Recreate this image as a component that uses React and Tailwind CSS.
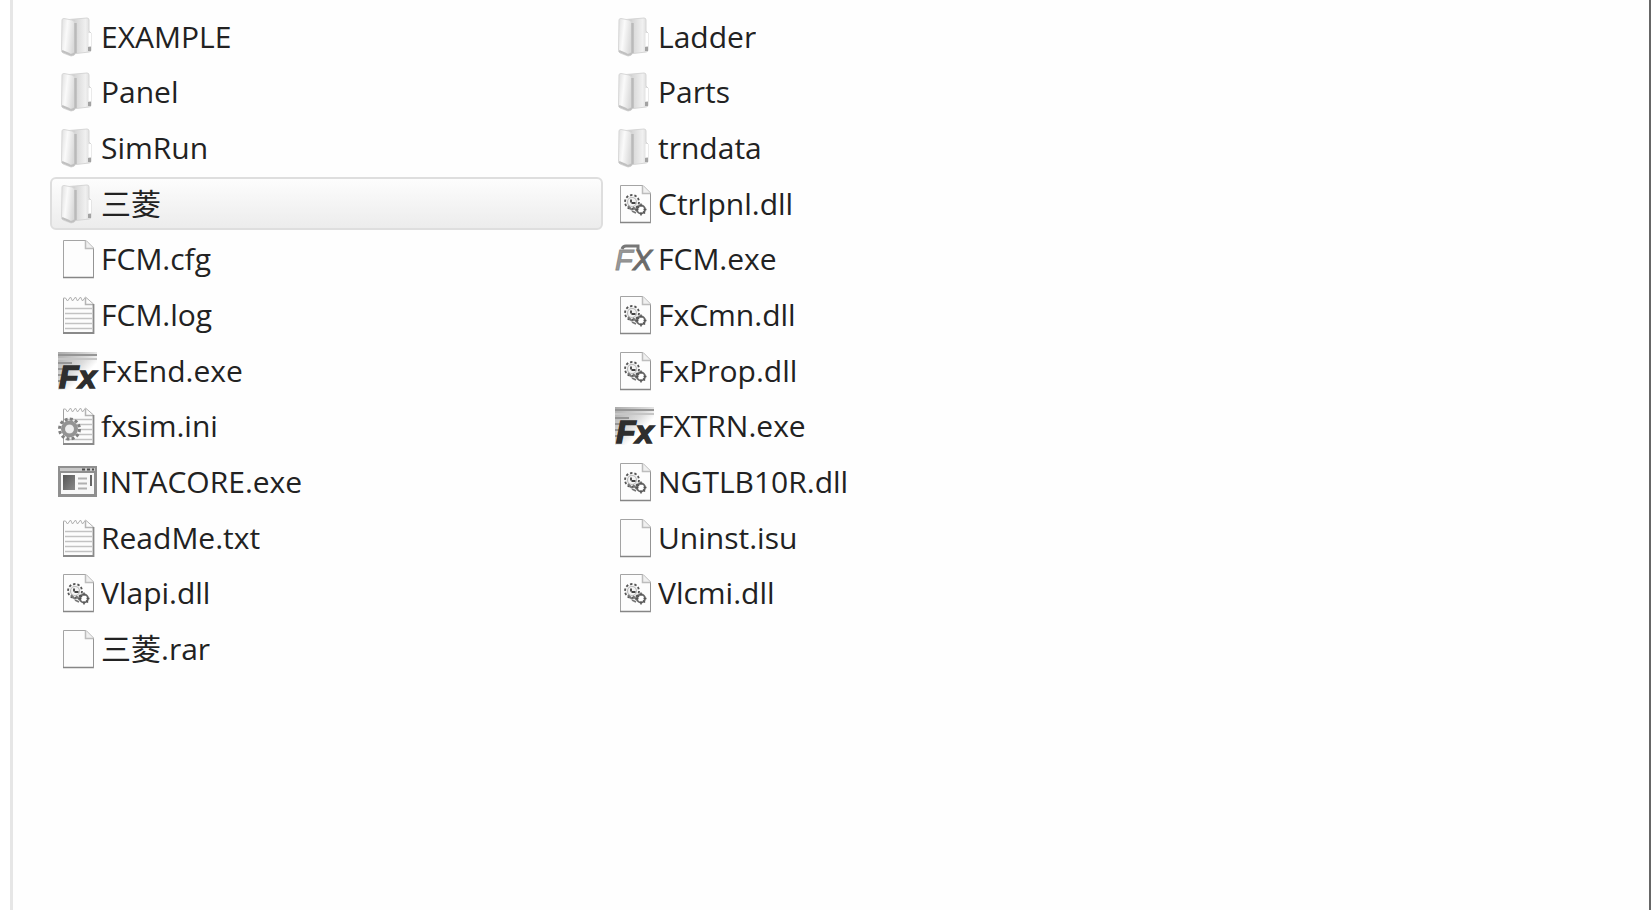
import { useState } from "react";

const columns = [
  [
    ["folder", "EXAMPLE"],
    ["folder", "Panel"],
    ["folder", "SimRun"],
    ["folder", "三菱"],
    ["file", "FCM.cfg"],
    ["notes", "FCM.log"],
    ["fx", "FxEnd.exe"],
    ["config", "fxsim.ini"],
    ["program", "INTACORE.exe"],
    ["notes", "ReadMe.txt"],
    ["library", "Vlapi.dll"],
    ["file", "三菱.rar"],
  ],
  [
    ["folder", "Ladder"],
    ["folder", "Parts"],
    ["folder", "trndata"],
    ["library", "Ctrlpnl.dll"],
    ["fxOutline", "FCM.exe"],
    ["library", "FxCmn.dll"],
    ["library", "FxProp.dll"],
    ["fx", "FXTRN.exe"],
    ["library", "NGTLB10R.dll"],
    ["file", "Uninst.isu"],
    ["library", "Vlcmi.dll"],
  ],
];

function Gradients() {
  return (
    <svg className="absolute size-0" aria-hidden="true">
      <defs>
        <linearGradient id="cover" x1="0" x2="1" y1="0" y2="0.3">
          <stop offset="0" stopColor="#dedede" />
          <stop offset="0.45" stopColor="#fafafa" />
          <stop offset="1" stopColor="#dadada" />
        </linearGradient>
        <linearGradient id="back" x1="0" x2="1" y1="0" y2="0">
          <stop offset="0" stopColor="#b4b4b4" />
          <stop offset="0.3" stopColor="#d8d8d8" />
          <stop offset="0.75" stopColor="#f0f0f0" />
          <stop offset="1" stopColor="#d8d8d8" />
        </linearGradient>
        <linearGradient id="sky" x1="0" x2="1" y1="0" y2="1">
          <stop offset="0" stopColor="#ababab" />
          <stop offset="0.45" stopColor="#dcdcdc" />
          <stop offset="0.65" stopColor="#ffffff" />
        </linearGradient>
        <linearGradient id="panel" x1="0" x2="1" y1="0" y2="1">
          <stop offset="0" stopColor="#555" />
          <stop offset="1" stopColor="#8a8a8a" />
        </linearGradient>
      </defs>
    </svg>
  );
}

function Folder() {
  return (
    <>
      <path d="M11 2.5 L29 1 Q31 1 31 3 V14 L33 16 V33 Q33 35 31 35 L14 37Z" fill="url(#back)" stroke="#d6d6d6" />
      <path d="M30.5 16 h2.500 v13 h-2.500z" fill="#fff" />
      <path d="M30 30 h3 v4 h-3z" fill="#a2a2a2" />
      <path d="M4 3 Q4 1.500 6 1.500 L14 3 Q17 4 17 7 V36 Q17 39 13 39 L5 36 Q3.500 35 3.500 33Z" fill="url(#cover)" stroke="#d8d8d8" />
      <path d="M17.500 6 V36" stroke="#bababa" strokeWidth="2.500" fill="none" />
      <path d="M4 34 L11 37 Q14 39 17 36" stroke="#c0c0c0" strokeWidth="2" fill="none" />
    </>
  );
}

function Sheet() {
  return (
    <>
      <path d="M5.500 1.500 H28 L35.500 9 V38.500 H5.500Z" fill="#fdfdfd" stroke="#a4a4a4" />
      <path d="M5 38.500 H36" stroke="#868686" strokeWidth="1.500" />
      <path d="M35.500 9 V39" stroke="#949494" />
      <path d="M27.500 1.500 V9.500 H35.500" fill="#f0f0f0" stroke="#bdbdbd" strokeWidth="1.500" />
    </>
  );
}

function Notes() {
  return (
    <>
      <path d="M5.500 3 l2 0 2 3 3-4 2 4 3-4 2 4 3-4 2 4 3-4 L35.500 9 V38.500 H5.500Z" fill="#fcfcfc" stroke="#b0b0b0" />
      <path d="M27.500 3 V9.500 H35.500" fill="none" stroke="#b4b4b4" strokeWidth="1.500" />
      <path d="M7 13.500 H34 M7 18.500 H34 M7 23.500 H34 M7 28.500 H34 M7 33.500 H34" stroke="#c2c2c2" strokeWidth="1.500" />
      <path d="M5.500 4 V38" stroke="#a0a0a0" />
      <path d="M5 38 H35.500 V9" stroke="#8a8a8a" strokeWidth="1.800" fill="none" />
    </>
  );
}

function Config() {
  return (
    <>
      <Notes />
      <circle cx="11.500" cy="23" r="10" fill="none" stroke="#808080" strokeWidth="3" strokeDasharray="3 2.236" />
      <circle cx="11.500" cy="23" r="6.500" fill="#dedede" stroke="#939393" strokeWidth="4" />
      <circle cx="11.500" cy="23" r="4" fill="#eee" />
    </>
  );
}

function Library() {
  return (
    <>
      <Sheet />
      <circle cx="17" cy="18" r="7" fill="#f4f4f4" stroke="#555" strokeWidth="1.800" strokeDasharray="2.400 1.998" />
      <circle cx="17" cy="18" r="4.500" fill="none" stroke="#bcbcbc" strokeWidth="1.200" />
      <path d="M16 18.500 v-3 M16.500 19 h4" stroke="#444" strokeWidth="1.800" />
      <path d="M13 22 l4 4 M18 23 l4 4 M17 27 l4 2" stroke="#777" strokeWidth="1.800" />
      <circle cx="26" cy="25.500" r="4" fill="#fff" stroke="#666" strokeWidth="1.800" />
      <path d="M26 19.500 v3 M26 28.500 v3 M20.500 25.500 h3 M28.500 25.500 h3 M22 22 l2 2 M30 29.500 l-2-2" stroke="#555" strokeWidth="1.500" />
    </>
  );
}

function Program() {
  return (
    <>
      <path d="M0 4 H39 V35 H0Z" fill="#8f8f8f" />
      <path d="M2 6 H37 V9 H2Z" fill="#c8c8c8" />
      <path d="M24 7.500 H27 M29 7.500 H32 M34 7.500 H36" stroke="#4c4c4c" strokeWidth="2" />
      <path d="M3 11 H36 V32 H3Z" fill="#f8f8f8" />
      <path d="M5 13 H17 V28 H5Z" fill="url(#panel)" />
      <path d="M20 16.500 H29 M20 21.500 H29 M20 26.500 H29" stroke="#b0b0b0" strokeWidth="2" />
      <path d="M33 13 V24" stroke="#666" strokeWidth="2" />
    </>
  );
}

function Fx() {
  return (
    <>
      <path d="M0 1 H39 V39 H0Z" fill="url(#sky)" />
      <path d="M0 4 H39 M0 12 H14 M0 18 H12 M0 24 H10 M0 30 H6" stroke="#959595" strokeWidth="2" />
      <path d="M0 8 H39" stroke="#c6c6c6" strokeWidth="2" />
      <text x="1" y="37" fontFamily="Liberation Sans, sans-serif" fontStyle="italic" fontWeight="700" fontSize="32" fill="#2e2e2e" stroke="#2e2e2e" strokeWidth="1.500">Fx</text>
    </>
  );
}

function FxOutline() {
  return (
    <>
      <text x="0" y="31" fontFamily="Liberation Sans, sans-serif" fontStyle="italic" fontSize="29" fill="#9a9a9a" stroke="#8a8a8a">
        F<tspan fill="#6a6a6a" stroke="#6a6a6a">X</tspan>
      </text>
      <path d="M7 10 Q8 7 11 7 H23 V11" fill="none" stroke="#777" strokeWidth="3" />
    </>
  );
}

const icons = {
  folder: Folder,
  file: Sheet,
  notes: Notes,
  config: Config,
  library: Library,
  program: Program,
  fx: Fx,
  fxOutline: FxOutline,
};

function Entry({ kind, name, selected, onSelect }) {
  const Icon = icons[kind];
  return (
    <li className="flex items-center">
      <button
        type="button"
        aria-pressed={selected}
        onClick={onSelect}
        className={
          "flex h-[53px] w-full items-center gap-1 rounded-md border-2 px-1.5 text-left " +
          (selected
            ? "border-[#dedede] bg-linear-to-b from-[#fdfdfd] to-[#ececec]"
            : "border-transparent")
        }
      >
        <svg viewBox="0 0 39 40" className="h-10 w-[39px] shrink-0 overflow-visible" aria-hidden="true">
          <Icon />
        </svg>
        <span className="truncate">{name}</span>
      </button>
    </li>
  );
}

export default function App() {
  const [selected, setSelected] = useState("三菱");
  return (
    <div className="flex min-h-screen bg-white pb-0.5 pl-[10px] font-['Open_Sans','Noto_Sans_CJK_SC',sans-serif] text-[30px] leading-10 text-[#222]">
      <Gradients />
      <main className="grow border-r-2 border-l-[3px] border-r-[#666] border-l-[#e6e6e6] bg-[#fefefe] pt-[9px] pl-[37px]">
        <div className="grid grid-cols-[repeat(2,minmax(0,553px))] gap-x-1">
          {columns.map((entries, i) => (
            <ul key={i} className="grid h-[668px] grid-rows-12">
              {entries.map(([kind, name]) => (
                <Entry
                  key={name}
                  kind={kind}
                  name={name}
                  selected={selected === name}
                  onSelect={() => setSelected(name)}
                />
              ))}
            </ul>
          ))}
        </div>
      </main>
    </div>
  );
}
